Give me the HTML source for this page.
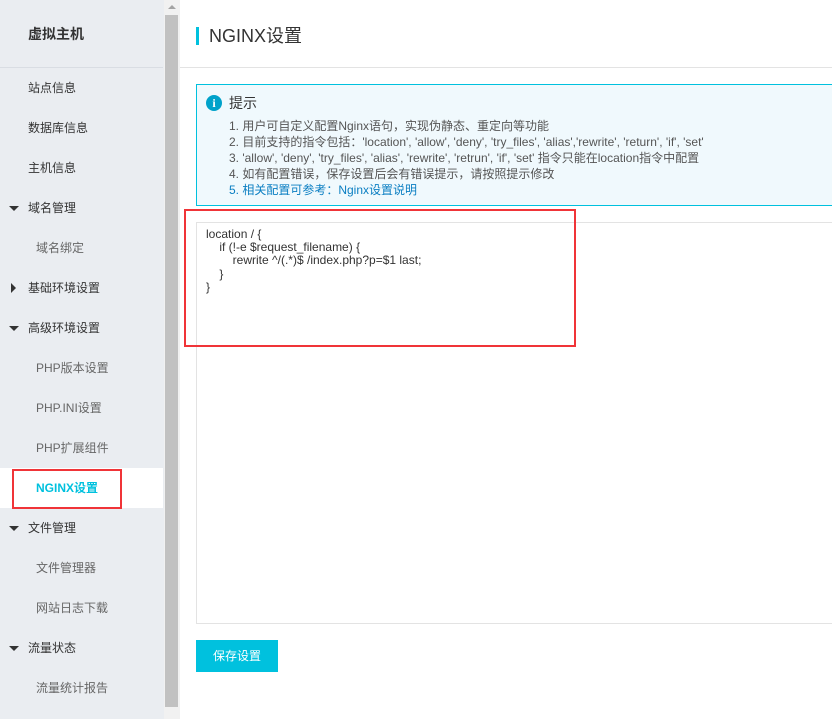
<!DOCTYPE html>
<html><head><meta charset="utf-8"><style>
*{margin:0;padding:0;box-sizing:border-box}
body{width:832px;height:719px;overflow:hidden;background:#fff;font-family:"Liberation Sans","Noto Sans CJK SC",sans-serif;position:relative;color:#333}
.side{position:absolute;left:0;top:0;width:164px;height:719px;background:#eaedf1}
.side .h{position:absolute;left:28px;top:24px;font-size:14px;font-weight:bold;color:#333}
.side .line{position:absolute;left:0;top:67px;width:163px;height:1px;background:#d9dde3}
.it{position:absolute;left:0;width:163px;height:40px;line-height:40px;font-size:12px;color:#333}
.it.l1{padding-left:28px}
.it.l2{padding-left:36px;color:#666}
.it.sel{background:#fff;color:#00c1de;font-weight:bold}
.tri-d{position:absolute;left:9px;top:18px;border-left:5px solid transparent;border-right:5px solid transparent;border-top:5px solid #333}
.tri-r{position:absolute;left:11px;top:15px;border-top:5px solid transparent;border-bottom:5px solid transparent;border-left:5px solid #333}
.sb{position:absolute;left:164px;top:0;width:16px;height:719px;background:#f1f1f1}
.thumb{position:absolute;left:165px;top:15px;width:13px;height:692px;background:#c1c1c1}
.up{position:absolute;left:168px;top:5px;border-left:4px solid transparent;border-right:4px solid transparent;border-bottom:4px solid #a3a3a3}
.title{position:absolute;left:196px;top:27px;border-left:3px solid #00c1de;padding-left:10px;font-size:18px;line-height:18px;color:#333}
.hr{position:absolute;left:180px;top:67px;width:652px;height:1px;background:#e3e3e3}
.tip{position:absolute;left:196px;top:84px;width:640px;height:122px;border:1px solid #00c1de;background:#f0f9fd}
.tip .ic{position:absolute;left:9px;top:10px;width:16px;height:16px;border-radius:50%;background:#00a2ca;color:#fff;font-size:12px;font-weight:bold;text-align:center;line-height:16px;font-family:"Liberation Serif",serif}
.tip .t{position:absolute;left:32px;top:8px;font-size:14px;color:#333}
.tip .ls{position:absolute;left:32px;top:33px;font-size:12px;line-height:16px;color:#555}
.tip .ls .b{color:#0a7ec2}
.ta{position:absolute;left:196px;top:222px;width:640px;height:402px;border:1px solid #e3e3e3;background:#fff;font-size:12px;line-height:13.2px;color:#333;padding:5px 9px;white-space:pre}
.red{position:absolute;border:2px solid #f03438}
.btn{position:absolute;left:196px;top:640px;width:82px;height:32px;background:#00c1de;color:#fff;font-size:12px;text-align:center;line-height:32px}
</style></head><body>
<div class="side">
<div class="h">虚拟主机</div><div class="line"></div>
<div class="it l1" style="top:68px">站点信息</div>
<div class="it l1" style="top:108px">数据库信息</div>
<div class="it l1" style="top:148px">主机信息</div>
<div class="it l1" style="top:188px"><span class="tri-d"></span>域名管理</div>
<div class="it l2" style="top:228px">域名绑定</div>
<div class="it l1" style="top:268px"><span class="tri-r"></span>基础环境设置</div>
<div class="it l1" style="top:308px"><span class="tri-d"></span>高级环境设置</div>
<div class="it l2" style="top:348px">PHP版本设置</div>
<div class="it l2" style="top:388px">PHP.INI设置</div>
<div class="it l2" style="top:428px">PHP扩展组件</div>
<div class="it l2 sel" style="top:468px">NGINX设置</div>
<div class="it l1" style="top:508px"><span class="tri-d"></span>文件管理</div>
<div class="it l2" style="top:548px">文件管理器</div>
<div class="it l2" style="top:588px">网站日志下载</div>
<div class="it l1" style="top:628px"><span class="tri-d"></span>流量状态</div>
<div class="it l2" style="top:668px">流量统计报告</div>
</div>
<div class="red" style="left:12px;top:469px;width:110px;height:40px"></div>
<div class="sb"></div><div class="thumb"></div><div class="up"></div>
<div class="title">NGINX设置</div>
<div class="hr"></div>
<div class="tip"><div class="ic">i</div><div class="t">提示</div>
<div class="ls">1. 用户可自定义配置Nginx语句，实现伪静态、重定向等功能<br>2. 目前支持的指令包括：'location', 'allow', 'deny', 'try_files', 'alias','rewrite', 'return', 'if', 'set'<br>3. 'allow', 'deny', 'try_files', 'alias', 'rewrite', 'retrun', 'if', 'set' 指令只能在location指令中配置<br>4. 如有配置错误，保存设置后会有错误提示，请按照提示修改<br><span class="b">5. 相关配置可参考：Nginx设置说明</span></div></div>
<div class="ta">location / {
    if (!-e $request_filename) {
        rewrite ^/(.*)$ /index.php?p=$1 last;
    }
}</div>
<div class="red" style="left:184px;top:209px;width:392px;height:138px"></div>
<div class="btn">保存设置</div>
</body></html>
